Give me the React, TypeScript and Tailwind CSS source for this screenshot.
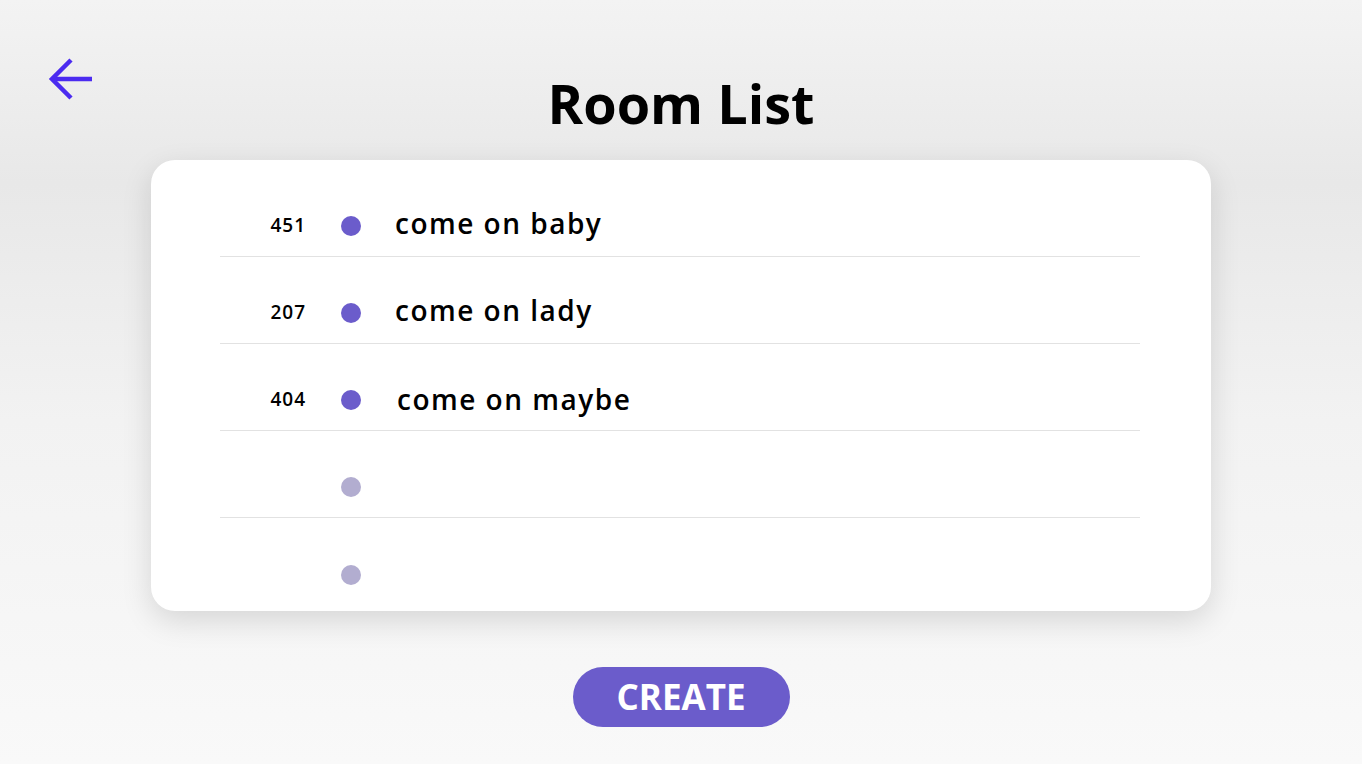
import React from "react";

const rooms = [
  { id: "451", name: "come on baby" },
  { id: "207", name: "come on lady" },
  { id: "404", name: "come on maybe" },
  { id: "", name: "" },
  { id: "", name: "" },
];

const App = () => {
  return (
    <div className="h-[764px] w-full overflow-hidden bg-[linear-gradient(180deg,#f3f3f3_0%,#e8e8e8_24%,#f2f2f2_55%,#f9f9f9_100%)] font-['Open_Sans',sans-serif]">
      {/* header */}
      <div className="grid grid-cols-[1fr_auto_1fr] pt-[57px]">
        <div className="pl-[47px]">
          <svg width="46" height="44" viewBox="0 0 46 44" fill="none" stroke="#4b2bf0" strokeWidth="4.5">
            <path d="M45 22H5" />
            <path d="M24 3L5 22l19 19" />
          </svg>
        </div>
        <h1 className="mt-[10px] text-[54px] font-bold leading-[73px] text-black">Room List</h1>
        <div />
      </div>

      {/* list */}
      <div className="mx-auto mt-[20px] h-[451px] w-[1060px] rounded-[24px] bg-white pt-[10px] shadow-[0_10px_30px_rgba(0,0,0,0.13)]">
        <div className="ml-[69px] mr-[71px]">
          {rooms.map((room, i) => (
            <div
              key={i}
              className={"flex h-[87px] items-center pt-[20px] " + (i < rooms.length - 1 ? "border-b border-[#e2e2e2]" : "")}
            >
              <span className="w-[86px] pt-[4px] text-right text-[19px] font-semibold tracking-[1px] text-black">{room.id}</span>
              <span
                className={"ml-[35px] mt-[6px] h-[20px] w-[20px] rounded-full " + (room.id ? "bg-[#6b5ccb]" : "bg-[#b2add0]")}
              />
              <span
                className={"text-[28px] font-semibold tracking-[1.5px] text-black " + (i === 2 ? "ml-[36px] mt-[4px]" : "ml-[34px]")}
              >
                {room.name}
              </span>
            </div>
          ))}
        </div>
      </div>

      {/* create */}
      <div className="mt-[56px] flex justify-center">
        <button className="h-[60px] w-[217px] rounded-full bg-[#6b5ccb] text-[35px] font-bold text-white">CREATE</button>
      </div>
    </div>
  );
};

export default App;
